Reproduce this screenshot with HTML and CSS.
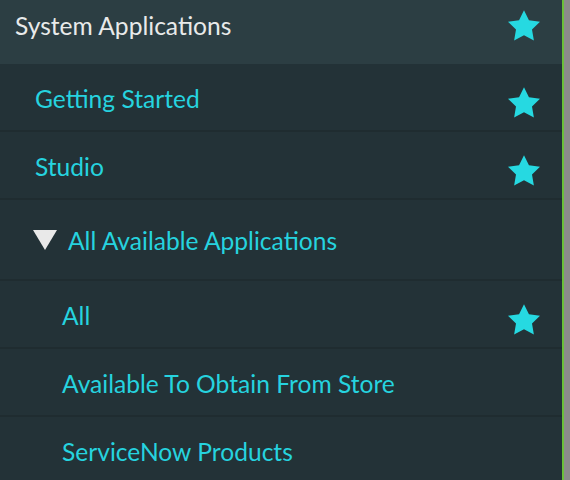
FILE: index.html
```html
<!DOCTYPE html>
<html>
<head>
<meta charset="utf-8">
<link rel="stylesheet" href="styles.css">
</head>
<body>
<div class="page">
  <nav class="panel">
    <div class="header">
      <span class="header-title">System Applications</span>
      <svg class="star star-head" viewBox="2 2 20 19.2"><path d="M12 2l3.09 6.26L22 9.27l-5 4.87 1.18 6.88L12 17.77l-6.18 3.25L7 14.14 2 9.27l6.91-1.01L12 2z"/></svg>
    </div>
    <div class="row lvl1">
      <span class="label">Getting Started</span>
      <svg class="star" viewBox="2 2 20 19.2"><path d="M12 2l3.09 6.26L22 9.27l-5 4.87 1.18 6.88L12 17.77l-6.18 3.25L7 14.14 2 9.27l6.91-1.01L12 2z"/></svg>
    </div>
    <div class="row lvl1">
      <span class="label">Studio</span>
      <svg class="star" viewBox="2 2 20 19.2"><path d="M12 2l3.09 6.26L22 9.27l-5 4.87 1.18 6.88L12 17.77l-6.18 3.25L7 14.14 2 9.27l6.91-1.01L12 2z"/></svg>
    </div>
    <div class="row lvl1 group">
      <svg class="caret" viewBox="0 0 24 20"><polygon points="0,0 24,0 12,20"/></svg>
      <span class="label">All Available Applications</span>
    </div>
    <div class="row lvl2">
      <span class="label">All</span>
      <svg class="star" viewBox="2 2 20 19.2"><path d="M12 2l3.09 6.26L22 9.27l-5 4.87 1.18 6.88L12 17.77l-6.18 3.25L7 14.14 2 9.27l6.91-1.01L12 2z"/></svg>
    </div>
    <div class="row lvl2">
      <span class="label">Available To Obtain From Store</span>
    </div>
    <div class="row lvl2">
      <span class="label">ServiceNow Products</span>
    </div>
  </nav>
  <div class="gutter"></div>
</div>
</body>
</html>
```
FILE: styles.css
```css
html, body {
  margin: 0;
  padding: 0;
  height: 100%;
  overflow: hidden;
}
body {
  font-family: "Lato", "Open Sans", sans-serif;
  background: #8a8a8a;
}
.page {
  display: flex;
  height: 480px;
}
.panel {
  width: 562px;
  flex: none;
  background: #233237;
  border-right: 2px solid #6abf3a;
  display: flex;
  flex-direction: column;
}
.gutter {
  flex: 1;
  background: #8b8b8b;
}
.header {
  height: 64px;
  flex: none;
  background: #2c3e43;
  display: flex;
  align-items: flex-start;
  justify-content: space-between;
  padding: 10px 22px 0 15px;
  box-sizing: border-box;
}
.header-title {
  color: #e8eaea;
  font-size: 24.6px;
  line-height: 30px;
  margin-top: 1px;
}
.row {
  flex: none;
  height: 68px;
  box-sizing: border-box;
  border-bottom: 2px solid #1f2c30;
  display: flex;
  align-items: center;
  justify-content: space-between;
  padding: 0 22px 0 35px;
}
.row.group {
  height: 81px;
  justify-content: flex-start;
  gap: 11px;
  padding-left: 33px;
}
.row.lvl2 {
  padding-left: 62px;
}
.label {
  color: #26d3df;
  font-size: 24.6px;
  line-height: 30px;
  margin-top: 4px;
}
.group .label {
  margin-top: 2px;
}
.star {
  width: 32px;
  height: 31px;
  fill: #26d9e1;
  margin-top: 10px;
}
.star-head {
  margin-top: 0;
}
.caret {
  width: 24px;
  height: 20px;
  fill: #e9e9e9;
}
```
